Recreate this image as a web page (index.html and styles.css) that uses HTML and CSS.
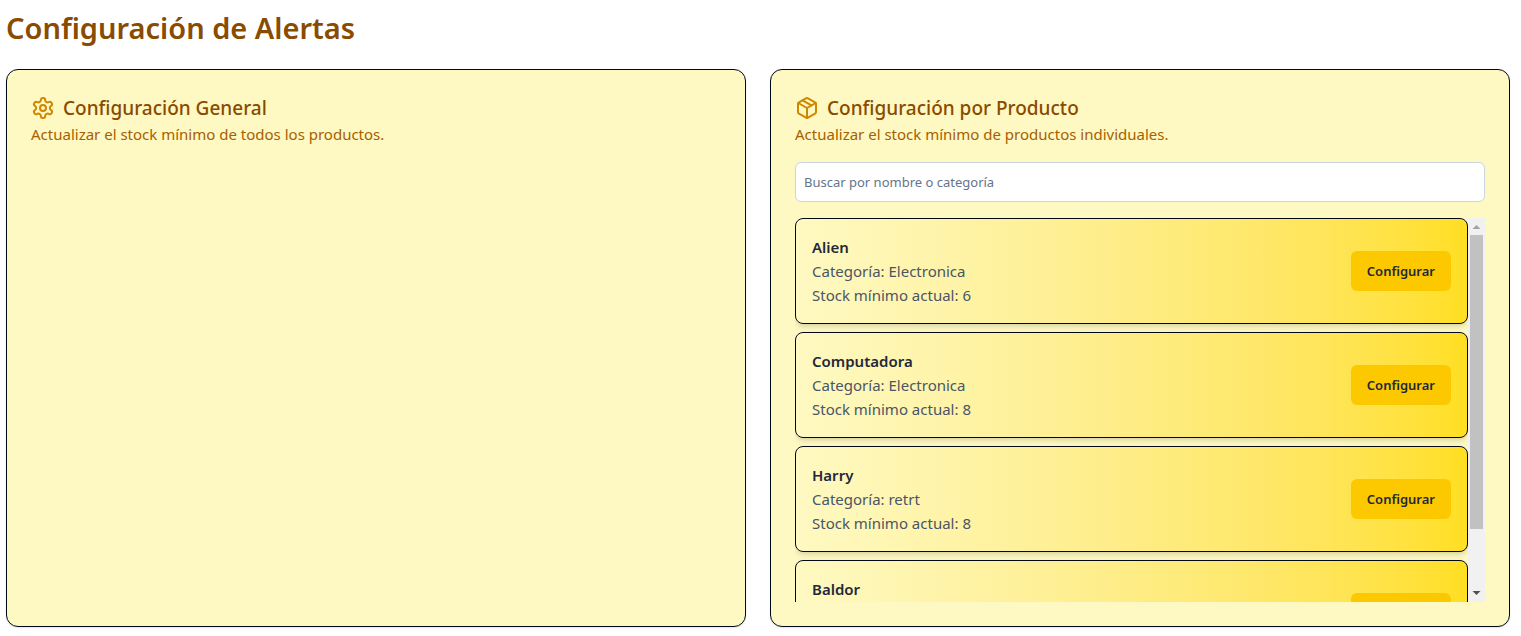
FILE: index.html
```html
<!DOCTYPE html>
<html lang="es">
<head>
<meta charset="utf-8">
<meta name="viewport" content="width=device-width, initial-scale=1">
<title>Configuración de Alertas</title>
<link rel="stylesheet" href="styles.css">
</head>
<body>
<main class="page">
  <h1 class="page-title">Configuración de Alertas</h1>
  <div class="panels">
    <section class="panel">
      <h2 class="panel-title">
        <svg class="icon" viewBox="0 0 24 24" aria-hidden="true"><path d="M12.22 2h-.44a2 2 0 0 0-2 2v.18a2 2 0 0 1-1 1.73l-.43.25a2 2 0 0 1-2 0l-.15-.08a2 2 0 0 0-2.73.73l-.22.38a2 2 0 0 0 .73 2.73l.15.1a2 2 0 0 1 1 1.72v.51a2 2 0 0 1-1 1.74l-.15.09a2 2 0 0 0-.73 2.73l.22.38a2 2 0 0 0 2.73.73l.15-.08a2 2 0 0 1 2 0l.43.25a2 2 0 0 1 1 1.73V20a2 2 0 0 0 2 2h.44a2 2 0 0 0 2-2v-.18a2 2 0 0 1 1-1.73l.43-.25a2 2 0 0 1 2 0l.15.08a2 2 0 0 0 2.73-.73l.22-.39a2 2 0 0 0-.73-2.73l-.15-.08a2 2 0 0 1-1-1.74v-.5a2 2 0 0 1 1-1.74l.15-.09a2 2 0 0 0 .73-2.73l-.22-.38a2 2 0 0 0-2.73-.73l-.15.08a2 2 0 0 1-2 0l-.43-.25a2 2 0 0 1-1-1.73V4a2 2 0 0 0-2-2z"/><circle cx="12" cy="12" r="3"/></svg>
        <span>Configuración General</span>
      </h2>
      <p class="panel-text">Actualizar el stock mínimo de todos los productos.</p>
    </section>
    <section class="panel">
      <h2 class="panel-title">
        <svg class="icon" viewBox="0 0 24 24" aria-hidden="true"><path d="M11 21.73a2 2 0 0 0 2 0l7-4A2 2 0 0 0 21 16V8a2 2 0 0 0-1-1.73l-7-4a2 2 0 0 0-2 0l-7 4A2 2 0 0 0 3 8v8a2 2 0 0 0 1 1.73z"/><path d="M12 22V12"/><path d="M3.3 7 12 12l8.7-5"/><path d="m7.5 4.27 9 5.15"/></svg>
        <span>Configuración por Producto</span>
      </h2>
      <p class="panel-text">Actualizar el stock mínimo de productos individuales.</p>
      <input class="search" type="text" placeholder="Buscar por nombre o categoría" aria-label="Buscar por nombre o categoría">
      <div class="product-scroller">
        <ul class="products">
          <li class="product">
            <div>
              <h3 class="product-name">Alien</h3>
              <p class="product-text">Categoría: Electronica</p>
              <p class="product-text">Stock mínimo actual: 6</p>
            </div>
            <button class="configure" type="button">Configurar</button>
          </li>
          <li class="product">
            <div>
              <h3 class="product-name">Computadora</h3>
              <p class="product-text">Categoría: Electronica</p>
              <p class="product-text">Stock mínimo actual: 8</p>
            </div>
            <button class="configure" type="button">Configurar</button>
          </li>
          <li class="product">
            <div>
              <h3 class="product-name">Harry</h3>
              <p class="product-text">Categoría: retrt</p>
              <p class="product-text">Stock mínimo actual: 8</p>
            </div>
            <button class="configure" type="button">Configurar</button>
          </li>
          <li class="product product-last">
            <div>
              <h3 class="product-name">Baldor</h3>
            </div>
            <button class="configure" type="button" aria-label="Configurar"></button>
          </li>
        </ul>
        <div class="scrollbar" aria-hidden="true">
          <svg class="scroll-arrow" viewBox="0 0 17 17"><path d="M4.500 11L8.500 7L12.500 11z" fill="#a3a3a3"/></svg>
          <div class="scroll-track"><div class="scroll-thumb"></div></div>
          <svg class="scroll-arrow" viewBox="0 0 17 17"><path d="M4.500 6L8.500 10L12.500 6z" fill="#505050"/></svg>
        </div>
      </div>
    </section>
  </div>
</main>
</body>
</html>
```
FILE: styles.css
```css
* {
  box-sizing: border-box;
  margin: 0;
  padding: 0;
}

body {
  background: #ffffff;
  color: #020817;
  font-family: "Segoe UI", "Noto Sans", "Open Sans", sans-serif;
  font-size: 15px;
  line-height: 24px;
}

.page {
  padding: 8px 11px 8px 6px;
}

.page-title {
  margin-bottom: 21px;
  color: #894b00;
  font-size: 29px;
  font-weight: 600;
  line-height: 40px;
}

.panels {
  display: grid;
  grid-template-columns: 1fr 1fr;
  gap: 24px;
}

.panel {
  padding: 24px;
  border: 1px solid #020817;
  border-radius: 12px;
  background: #fef8c2;
  box-shadow: 0 1px 2px rgba(0, 0, 0, 0.1);
}

.panel-title {
  display: flex;
  align-items: center;
  gap: 8px;
  color: #894b00;
  font-size: 19px;
  font-weight: 500;
  line-height: 28px;
}

.icon {
  width: 24px;
  height: 24px;
  fill: none;
  stroke: #d08700;
  stroke-width: 2;
  stroke-linecap: round;
  stroke-linejoin: round;
}

.panel-text {
  color: #a65f00;
}

.search {
  display: block;
  width: 100%;
  height: 40px;
  margin: 16px 0;
  padding: 0 8px;
  border: 1px solid #cbd5e1;
  border-radius: 6px;
  background: #ffffff;
  color: #020817;
  font: inherit;
  font-size: 13px;
}

.search::placeholder {
  color: #64748b;
  opacity: 1;
}

.product-scroller {
  display: flex;
  height: 384px;
}

.products {
  flex: 1;
  overflow-y: auto;
  scrollbar-width: none;
  list-style: none;
}

.scrollbar {
  display: flex;
  flex-direction: column;
  width: 17px;
  background: #f1f1f1;
}

.scroll-arrow {
  display: block;
  width: 17px;
  height: 17px;
}

.scroll-track {
  flex: 1;
  padding: 0 2px;
}

.scroll-thumb {
  height: 84%;
  background: #c1c1c1;
}

.product {
  display: flex;
  align-items: center;
  justify-content: space-between;
  margin-bottom: 8px;
  padding: 16px;
  border: 1px solid #020817;
  border-radius: 8px;
  background: linear-gradient(to right in oklab, #fef9c2, #ffdf20);
  box-shadow: 0 4px 6px -1px rgba(0, 0, 0, 0.1), 0 2px 4px -2px rgba(0, 0, 0, 0.1);
}

.product-last {
  min-height: 106px;
}

.product-last > div {
  align-self: flex-start;
}

.product-name {
  color: #1e2939;
  font-size: 15px;
  font-weight: 600;
}

.product-text {
  color: #4a5565;
}

.configure {
  min-width: 100px;
  height: 40px;
  padding: 0 16px;
  border: 0;
  border-radius: 6px;
  background: #fcc800;
  color: #1e2939;
  font: inherit;
  font-size: 13px;
  font-weight: 600;
}
```
